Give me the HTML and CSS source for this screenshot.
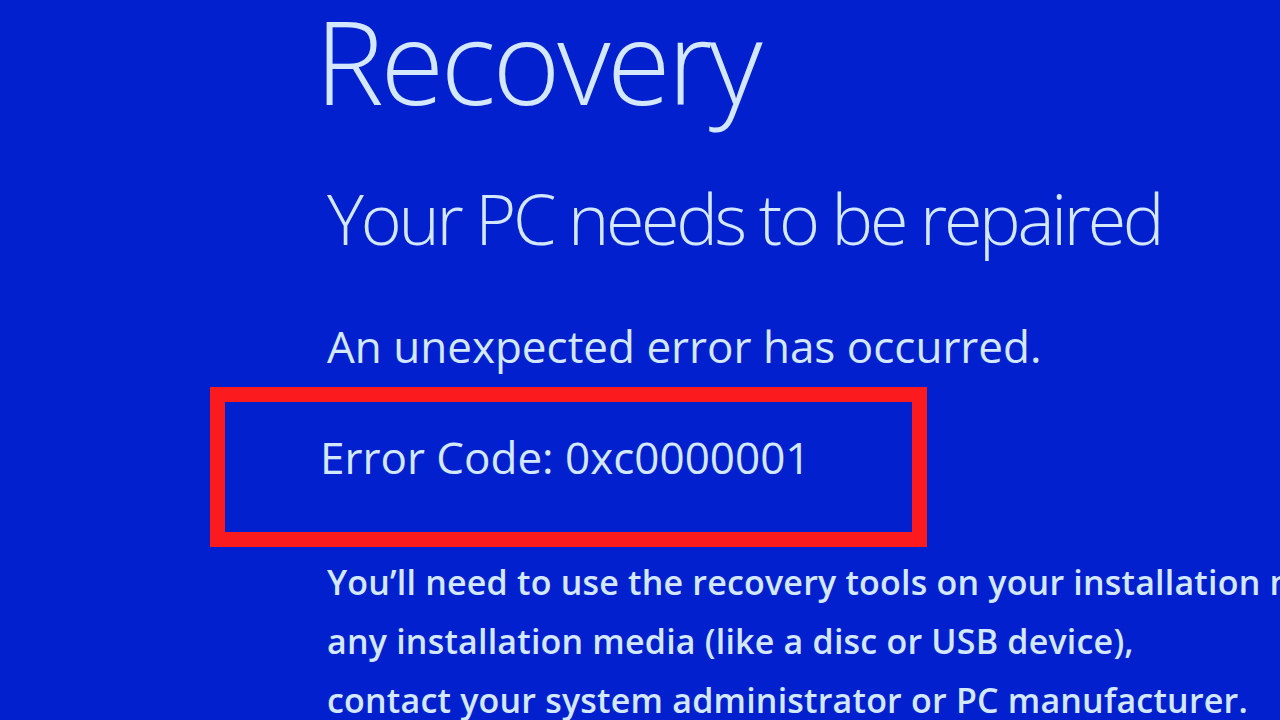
FILE: index.html
```html
<!DOCTYPE html>
<html lang="en">
<head>
<meta charset="utf-8">
<title>Recovery</title>
<link rel="stylesheet" href="styles.css">
</head>
<body>
<main class="screen">
  <h1 class="title">Recovery</h1>
  <h2 class="heading">Your PC needs to be repaired</h2>
  <p class="subtitle">An unexpected error has occurred.</p>
  <div class="highlight">
    <p class="code">Error Code: 0xc0000001</p>
  </div>
  <div class="message">
    <p class="line">You’ll need to use the recovery tools on your installation media. If you don’t have</p>
    <p class="line">any installation media (like a disc or USB device),</p>
    <p class="line">contact your system administrator or PC manufacturer.</p>
  </div>
</main>
</body>
</html>
```
FILE: styles.css
```css
html, body {
  margin: 0;
  padding: 0;
  width: 1280px;
  height: 720px;
  overflow: hidden;
  background: #0320cf;
}
.screen {
  display: flex;
  flex-direction: column;
  align-items: flex-start;
  padding: 2px 0 0 327px;
  color: #d3e8ff;
  font-family: "Open Sans", "Noto Sans", sans-serif;
  white-space: nowrap;
}
.title, .heading, .subtitle, .code, .line {
  margin: 0;
}
.title {
  font-size: 116px;
  line-height: 116px;
  font-weight: 300;
  letter-spacing: -3.4px;
  margin-left: -12px;
}
.heading {
  margin-top: 65px;
  font-size: 70px;
  line-height: 70px;
  font-weight: 300;
  letter-spacing: -3.3px;
}
.subtitle {
  margin-top: 71px;
  font-size: 44px;
  line-height: 44px;
  font-weight: 400;
  letter-spacing: 0;
}
.highlight {
  margin-top: 19px;
  margin-left: -117px;
  width: 687px;
  height: 130px;
  box-sizing: content-box;
  border: 15px solid #fb1a1e;
  padding: 0;
}
.code {
  padding: 33px 0 0 95px;
  font-size: 44px;
  line-height: 44px;
  font-weight: 400;
  letter-spacing: 0;
}
.message {
  margin-top: 6px;
  display: flex;
  flex-direction: column;
}
.line {
  font-size: 34px;
  line-height: 59px;
  font-weight: 600;
  letter-spacing: 0.2px;
}
```
